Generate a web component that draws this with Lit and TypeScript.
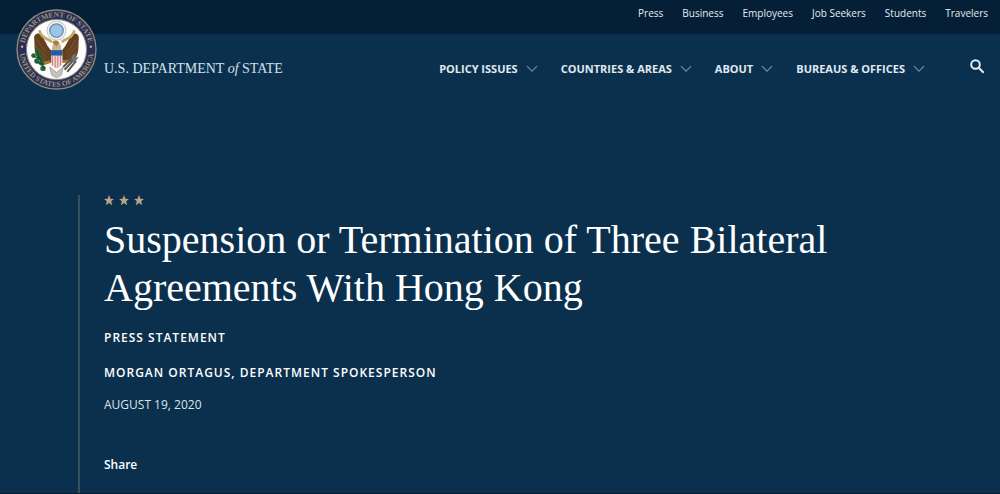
import { LitElement, html, css, svg } from "lit";
import { customElement, property } from "lit/decorators.js";

@customElement("state-seal")
class StateSeal extends LitElement {
  static styles = css`
    :host { display: block; }
    svg { display: block; width: 100%; height: auto; }
    .ring { font: 700 11px "Liberation Serif", serif; fill: #9c9872; }
  `;
  render() {
    return html`<svg viewBox="0 0 120 120" role="img" aria-label="Department of State seal">
      <defs>
        <path id="upper" d="M12 60a48 48 0 0 1 96 0" />
        <path id="lower" d="M5 60a55 55 0 0 0 110 0" />
      </defs>
      <circle cx="60" cy="60" r="58.500" fill="#2b2e5b" stroke="#8f8c72" stroke-width="2" />
      <circle cx="60" cy="60" r="44.500" fill="#fdfdfd" stroke="#8c8a78" stroke-width="1.500" />
      <text class="ring"><textPath href="#upper" startOffset="50%" text-anchor="middle">DEPARTMENT OF STATE</textPath></text>
      <text class="ring"><textPath href="#lower" startOffset="50%" text-anchor="middle">UNITED STATES OF AMERICA</textPath></text>
      <circle cx="9" cy="56" r="1.800" fill="#b9b27e" /><circle cx="111" cy="56" r="1.800" fill="#b9b27e" />
      <path d="M54 62C46 58 43 44 37 38c-5-4-11 0-10 6 1 11-1 22 6 30 6 8 13 1 19 6l5-7z" fill="#65401f" />
      <path d="M66 62C74 58 77 44 83 38c5-4 11 0 10 6-1 11 1 22-6 30-6 8-13 1-19 6l-5-7z" fill="#65401f" />
      <g fill="none" stroke="#85603b" stroke-width="1">
        <path d="M31 45l14 21M28 53l17 19M31 63l13 13M89 45L75 66M92 53L75 72M89 63L76 76" />
      </g>
      <path d="M53 66c1-7-1-16 7-17 8 0 7 10 7 17z" fill="#c9b48c" />
      <path d="M35 33c3 10 10 10 17 15M86 33c-3 10-10 10-17 15" fill="none" stroke="#c4aa68" stroke-width="4" stroke-linecap="round" />
      <path d="M54 50c1-5 8-5 10 0l-4 5z" fill="#a88135" />
      <circle cx="60" cy="32" r="14" fill="#f4f6f6" stroke="#c2c9c7" stroke-width="1.500" />
      <circle cx="60" cy="32" r="10" fill="#9bc5e2" stroke="#668db2" stroke-width="2" />
      <path d="M51 78l-13 4M69 78l13-1" stroke="#a67a32" stroke-width="4" />
      <path d="M50 86l10 8 10-8-3 12-7 4-7-4z" fill="#c7c4c0" stroke="#918a7d" stroke-width="1" />
      <path d="M52 62h17v15q0 8-8.500 11Q52 85 52 77z" fill="#efd7d5" />
      <path d="M54 69v15M58 69v18M62 69v18M66 69v15" stroke="#d77780" stroke-width="1.600" />
      <path d="M52 61h17v8H52z" fill="#1c5e9f" />
      <g fill="#28663a">
        <circle cx="32" cy="63" r="4" /><circle cx="26" cy="69" r="3.500" /><circle cx="35" cy="71" r="4" />
        <circle cx="31" cy="77" r="4" /><circle cx="38" cy="80" r="4" /><circle cx="40" cy="88" r="4" />
      </g>
      <path d="M31 62q5 13 11 27M26 70l11 4M30 79l10 3" fill="none" stroke="#164a2d" stroke-width="1.500" />
      <path d="M72 90l14-15M76 93l13-16M70 86l13-13" stroke="#5d5651" stroke-width="3" />
      <path d="M83 69l6-3-1 6 5-1-6 8-5-3z" fill="#77706a" />
    </svg>`;
  }
}

@customElement("nav-menu-button")
class NavMenuButton extends LitElement {
  @property() label = "";
  static styles = css`
    button {
      display: flex; align-items: center; gap: 8px; padding: 0; border: 0; background: none;
      color: #e0e9f1; font: 700 11px/20px "Open Sans", sans-serif; white-space: nowrap; cursor: pointer;
    }
    svg { width: 12px; height: 8px; fill: none; stroke: #6e8da5; stroke-width: 1.200; }
  `;
  render() {
    return html`<button type="button" aria-haspopup="true">${this.label}
      <svg viewBox="0 0 12 8" aria-hidden="true"><path d="M1 1.200l5 5 5-5" /></svg></button>`;
  }
}

@customElement("app-root")
class AppRoot extends LitElement {
  static styles = css`
    :host {
      display: flex; flex-direction: column; box-sizing: border-box; min-height: 100vh;
      background: #0a304d; border-bottom: 1px solid #061d32; color: #fff;
      font-family: "Open Sans", sans-serif;
    }
    a { color: inherit; text-decoration: none; }
    header { position: relative; }
    .utility {
      display: flex; justify-content: flex-end; gap: 19px; padding: 3px 12px 11px;
      background: #041f36; color: #e6ecf2; font-size: 10px; line-height: 20px;
    }
    .bar { display: flex; align-items: center; padding: 25px 15px 23px 104px; }
    .brand { color: #d5e1eb; font: 14px/20px "Liberation Serif", serif; white-space: nowrap; }
    .seal { position: absolute; left: 16px; top: 9px; width: 81px; }
    nav { display: flex; gap: 23px; margin-left: auto; }
    .search { display: flex; margin-left: 44px; padding: 0; border: 0; background: none; color: #e3edf5; cursor: pointer; }
    .search svg { width: 16px; height: 20px; fill: none; stroke: currentColor; stroke-width: 2; }
    main { flex: 1; display: flex; margin: 93px 78px 0; border-left: 2px solid #36505f; padding-left: 24px; }
    article { max-width: 760px; }
    .stars { display: flex; gap: 5px; height: 11px; }
    .stars svg { width: 10px; height: 11px; fill: #b9a584; }
    h1 { margin: 10px 0 16px; font: 400 40px/48px "Liberation Serif", serif; }
    p { margin: 0; font-size: 12px; line-height: 20px; }
    .kicker { margin-bottom: 15px; font-weight: 600; letter-spacing: 1px; }
    .byline { margin-bottom: 12px; }
    .date { margin-bottom: 40px; color: #dae3eb; }
    h2 { margin: 0; font-size: 12px; line-height: 20px; font-weight: 600; }
  `;
  render() {
    const links = ["Press", "Business", "Employees", "Job Seekers", "Students", "Travelers"];
    const menus = ["POLICY ISSUES", "COUNTRIES & AREAS", "ABOUT", "BUREAUS & OFFICES"];
    const star = svg`<path d="M5 0l1.400 3.700L10 3.900 7.200 6.300 8.200 10.200 5 8l-3.200 2.200 1-3.900L0 3.900l3.600-.2z"/>`;
    return html`
      <header>
        <div class="utility">${links.map((l) => html`<a href="#">${l}</a>`)}</div>
        <div class="bar">
          <a class="brand" href="#">U.S. DEPARTMENT <em>of</em> STATE</a>
          <nav aria-label="Main">${menus.map((m) => html`<nav-menu-button .label=${m}></nav-menu-button>`)}</nav>
          <button class="search" type="button" aria-label="Search">
            <svg viewBox="0 1 16 20"><circle cx="6.500" cy="6.500" r="4.300" /><path d="M9.700 9.700l5 5" /></svg>
          </button>
        </div>
        <state-seal class="seal"></state-seal>
      </header>
      <main>
        <article>
          <div class="stars" aria-hidden="true">${[0, 1, 2].map(() => html`<svg viewBox="0 0 10 11">${star}</svg>`)}</div>
          <h1>Suspension or Termination of Three Bilateral Agreements With Hong Kong</h1>
          <p class="kicker">PRESS STATEMENT</p>
          <p class="kicker byline">MORGAN ORTAGUS, DEPARTMENT SPOKESPERSON</p>
          <p class="date">AUGUST 19, 2020</p>
          <h2>Share</h2>
        </article>
      </main>`;
  }
}
